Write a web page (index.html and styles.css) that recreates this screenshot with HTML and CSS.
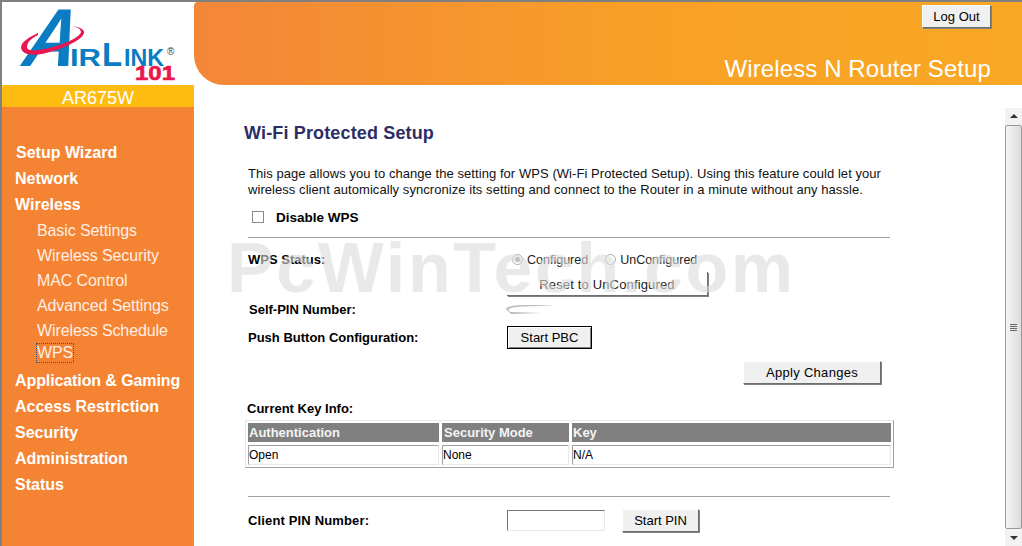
FILE: index.html
```html
<!DOCTYPE html>
<html lang="en">
<head>
<meta charset="utf-8">
<title>Wireless N Router Setup</title>
<link rel="stylesheet" href="styles.css">
</head>
<body>
<div class="app">
  <aside class="side">
    <div class="logo">
      <svg width="192" height="83" viewBox="2 2 192 83">
        <text class="lg-a" transform="translate(18,66) skewX(-20) scale(.88,1)">A</text>
        <text class="lg-small" x="70" y="66" textLength="31" lengthAdjust="spacingAndGlyphs">IR</text>
        <text class="lg-big" x="102" y="66">L</text>
        <text class="lg-small" x="124" y="66" textLength="40" lengthAdjust="spacingAndGlyphs">INK</text>
        <path class="lg-swoosh" d="M21 47 C22 41 30 37 38 33 L38 35 C32 38 27 42 27 47 C27 51 34 51 44 49 C60 46 80 38 81 32 C81 29 77 27 72 26 C80 27 85 30 84 33 C82 41 60 50 42 54 C30 56 21 54 21 47 Z"/>
        <text class="lg-reg" x="167" y="55">®</text>
        <text class="lg-101" x="135" y="80" textLength="40" lengthAdjust="spacingAndGlyphs">101</text>
      </svg>
    </div>
    <div class="model">AR675W</div>
    <nav class="nav">
      <a class="top first">Setup Wizard</a>
      <a class="top">Network</a>
      <a class="top">Wireless</a>
      <a class="sub">Basic Settings</a>
      <a class="sub">Wireless Security</a>
      <a class="sub">MAC Control</a>
      <a class="sub">Advanced Settings</a>
      <a class="sub">Wireless Schedule</a>
      <a class="sub current"><span class="focus-ring">WPS</span></a>
      <a class="top after">Application &amp; Gaming</a>
      <a class="top">Access Restriction</a>
      <a class="top">Security</a>
      <a class="top">Administration</a>
      <a class="top">Status</a>
    </nav>
  </aside>
  <div class="main">
    <header class="banner">
      <button class="btn logout" type="button">Log Out</button>
      <div class="banner-title">Wireless N Router Setup</div>
    </header>
    <div class="body">
      <div class="content">
        <h1 class="title">Wi-Fi Protected Setup</h1>
        <p class="intro">This page allows you to change the setting for WPS (Wi-Fi Protected Setup). Using this feature could let your wireless client automically syncronize its setting and connect to the Router in a minute without any hassle.</p>
        <label class="disable"><span class="check"></span><b>Disable WPS</b></label>
        <hr class="rule">
        <div class="row status">
          <b class="label">WPS Status:</b>
          <div class="radios">
            <span class="radio on"></span><span class="radio-text">Configured</span>
            <span class="radio"></span><span>UnConfigured</span>
          </div>
        </div>
        <div class="row reset-row"><span class="label"></span><button class="btn reset" type="button">Reset to UnConfigured</button></div>
        <div class="row pin">
          <b class="label self">Self-PIN Number:</b>
          <svg class="smudge" width="60" height="16" viewBox="0 0 60 16"><path d="M1 8 C2 4 20 3 50 5 C30 5 8 5 4 8 C3 10 5 11 6 11 L36 12 L6 13 Z"/></svg>
        </div>
        <div class="row pbc">
          <b class="label">Push Button Configuration:</b>
          <button class="btn focus" type="button">Start PBC</button>
        </div>
        <div class="apply-row"><button class="btn apply" type="button">Apply Changes</button></div>
        <b class="key-head">Current Key Info:</b>
        <div class="key-table">
          <div class="cell th">Authentication</div>
          <div class="cell th">Security Mode</div>
          <div class="cell th">Key</div>
          <div class="cell td">Open</div>
          <div class="cell td">None</div>
          <div class="cell td">N/A</div>
        </div>
        <hr class="rule second">
        <div class="row client">
          <b class="label">Client PIN Number:</b>
          <span class="input"></span>
          <button class="btn start-pin" type="button">Start PIN</button>
        </div>
      </div>
      <div class="scrollbar">
        <span class="arrow up"></span>
        <div class="thumb"><span class="grip"></span></div>
        <span class="arrow down"></span>
      </div>
    </div>
  </div>
  <div class="watermark">PcWinTech.com</div>
</div>
</body>
</html>
```
FILE: styles.css
```css
* { box-sizing: border-box; }
html, body { margin: 0; height: 100%; overflow: hidden; background: #fff; }
body { font-family: "Liberation Sans", Arial, sans-serif; font-size: 12px; color: #000; }
.app { position: relative; display: flex; width: 1022px; height: 546px; overflow: hidden; border-top: 2px solid #808080; border-left: 2px solid #808080; }

.side { width: 192px; flex: none; display: flex; flex-direction: column; background: #f48433; }
.logo { height: 83px; background: #fff; }
.logo svg { display: block; }
.logo text { font-family: "Liberation Sans", Arial, sans-serif; font-weight: 700; fill: #0a7cc1; }
.logo .lg-a { font-size: 82px; }
.logo .lg-small { font-size: 23px; }
.logo .lg-big { font-size: 33px; }
.logo .lg-reg { font-size: 10px; fill: #444; font-weight: 400; }
.logo .lg-101 { font-size: 20px; fill: #e8174f; stroke: #e8174f; stroke-width: .6px; }
.lg-swoosh { fill: #e8174f; }
.model { height: 22px; line-height: 27px; background: #ffbc10; color: #fff; font-size: 18px; text-align: center; }
.nav { display: flex; flex-direction: column; padding-top: 33px; }
.nav a { display: block; color: #fff; font-size: 16px; white-space: nowrap; }
.nav .top { height: 26px; line-height: 26px; padding-left: 13px; font-weight: 700; }
.nav .first { padding-left: 14px; }
.nav .sub { height: 25px; line-height: 25px; padding-left: 35px; letter-spacing: -.1px; color: #ffeee4; }
.nav .current { height: 19px; line-height: 19px; }
.focus-ring { display: inline-block; height: 18px; line-height: 18px; outline: 1px dotted #2a5a9a; }
.nav .after { margin-top: 6px; letter-spacing: -.1px; }

.main { flex: 1; min-width: 0; display: flex; flex-direction: column; }
.banner { height: 83px; flex: none; padding: 3px 31px 0 0; display: flex; flex-direction: column; align-items: flex-end; background: linear-gradient(90deg, #f48639 0%, #f8a026 55%, #f9a825 100%); border-radius: 4px 0 0 30px; }
.logout { width: 69px; height: 23px; }
.banner-title { margin-top: 27px; font-size: 24px; line-height: 28px; letter-spacing: .1px; color: #fff; }

.btn { padding: 0; font-family: inherit; font-size: 13px; color: #000; background: #f0f0f0; border: 1px solid; border-color: #fff #6e6e6e #6e6e6e #fff; box-shadow: 1px 1px 0 #808080; }
.body { flex: 1; min-height: 0; display: flex; }
.content { flex: 1; min-width: 0; padding: 0 0 0 50px; }
.title { margin: 38px 0 0; font-size: 18px; line-height: 21px; letter-spacing: .15px; font-weight: 700; color: #2d2d66; }
.intro { margin: 22px 0 0 4px; width: 640px; font-size: 13px; line-height: 16px; letter-spacing: .06px; color: #111; }
.disable { display: flex; align-items: center; margin: 10px 0 0 8px; height: 18px; font-size: 13.5px; }
.check { width: 12px; height: 12px; margin-right: 12px; border: 1px solid #888; background: #fff; }
.rule { margin: 11px 0 0 4px; width: 642px; height: 1px; border: 0; background: #a0a0a0; }
.row { display: flex; align-items: center; margin-left: 4px; }
.label { width: 259px; flex: none; font-size: 13px; }
.self { padding-left: 1px; }
.status { height: 18px; margin-top: 12px; }
.radios { display: flex; align-items: center; padding-top: 2px; font-size: 12.5px; color: #222; }
.radio { width: 11px; height: 11px; margin: -2px 4px 0 5px; border-radius: 50%; border: 1px solid #aaa; background: #fff; }
.radio.on { background: radial-gradient(circle, #999 0 2px, #fff 3px); }
.radio-text { margin-right: 12px; }
.reset-row { height: 24px; margin-top: 4px; }
.reset { width: 201px; height: 24px; padding-top: 2px; background: transparent; border-top: 0; border-left: 0; letter-spacing: .15px; color: #222; }
.pin { height: 20px; margin-top: 3px; }
.smudge { fill: #bbb; margin-left: -2px; }
.pbc { height: 24px; margin-top: 6px; }
.focus { width: 85px; height: 23px; border: 1px solid #000; box-shadow: inset 1px 1px 0 #fff, inset -1px -1px 0 #808080; }
.apply-row { display: flex; justify-content: flex-end; width: 637px; margin-top: 12px; }
.apply { width: 138px; height: 23px; letter-spacing: .3px; }
.key-head { display: block; margin: 17px 0 0 3px; font-size: 13px; line-height: 16px; }
.key-table { display: grid; grid-template-columns: 191px 127px 1fr; grid-template-rows: 19px 20px; gap: 3px; margin: 3px 0 0 1px; width: 649px; padding: 2px 2px 2px 2px; border: 1px solid; border-color: #e8e8e8 #a0a0a0 #a0a0a0 #e8e8e8; }
.cell { padding-left: 2px; font-size: 12px; }
.cell.th { line-height: 20px; font-size: 13px; font-weight: 700; color: #f4f4f4; background: #808080; }
.cell.th:nth-child(odd) { padding-left: 1px; }
.cell.td { border: 1px solid; border-color: #a0a0a0 #e8e8e8 #e8e8e8 #a0a0a0; line-height: 18px; padding-left: 0; }
.rule.second { margin-top: 28px; margin-left: 4px; }
.client { height: 24px; margin-top: 11px; }
.client .label { letter-spacing: .15px; }
.input { width: 98px; height: 21px; flex: none; border: 1px solid; border-color: #777 #e8e8e8 #e8e8e8 #777; background: #fff; }
.start-pin { width: 77px; height: 23px; margin-left: 17px; }

.scrollbar { width: 17px; flex: none; margin-top: 23px; display: flex; flex-direction: column; background: #f2f2f2; }
.arrow { height: 17px; flex: none; position: relative; }
.arrow::after { content: ""; position: absolute; left: 5px; border-left: 4px solid transparent; border-right: 4px solid transparent; }
.arrow.up::after { top: 6px; border-bottom: 4px solid #333; }
.arrow.down::after { top: 7px; border-top: 4px solid #333; }
.thumb { flex: 1; display: flex; align-items: center; justify-content: center; border: 1px solid #9a9a9a; border-radius: 2px; background: linear-gradient(90deg, #f4f4f4, #dcdcdc); }
.grip { width: 7px; height: 7px; background: repeating-linear-gradient(180deg, #666 0 1px, transparent 1px 2px); }

.watermark { position: absolute; left: 225px; top: 230px; font-size: 70px; line-height: 72px; font-weight: 700; letter-spacing: 2.6px; color: #dcdcdc; opacity: .6; white-space: nowrap; pointer-events: none; }
```
